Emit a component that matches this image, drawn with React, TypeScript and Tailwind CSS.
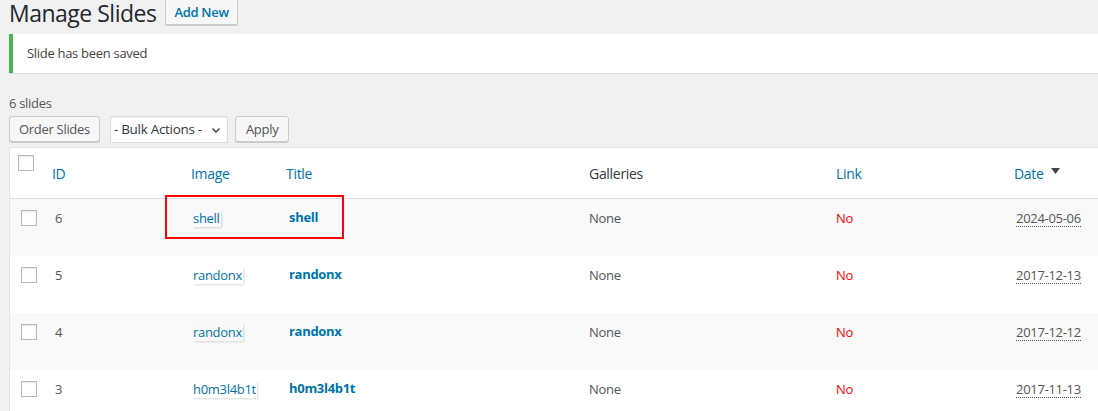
import React from "react";

const rows = [
  { id: "6", img: "shell", title: "shell", date: "2024-05-06", bg: "bg-[#f9f9f9]" },
  { id: "5", img: "randonx", title: "randonx", date: "2017-12-13", bg: "bg-white" },
  { id: "4", img: "randonx", title: "randonx", date: "2017-12-12", bg: "bg-[#f9f9f9]" },
  { id: "3", img: "h0m3l4b1t", title: "h0m3l4b1t", date: "2017-11-13", bg: "bg-white" },
];

const cols = "grid grid-cols-[32px_139px_95px_303px_247px_178px_1fr]";

function Checkbox({ className = "" }: { className?: string }) {
  return <div className={`w-[16px] h-[16px] border border-[#b4b9be] bg-white shadow-[inset_0_1px_2px_rgba(0,0,0,0.1)] ${className}`} />;
}

export default function App() {
  return (
    <div className="w-[1098px] h-[411px] overflow-hidden bg-[#f1f1f1] pl-[9px] relative tracking-[-0.3px]" style={{ fontFamily: '"Open Sans", "Noto Sans", sans-serif' }}>
      <div className="flex items-start h-[34px]">
        <h1 className="text-[23px] leading-[26px] text-[#23282d] tracking-[-0.5px]">Manage Slides</h1>
        <button className="ml-[9px] h-[26px] px-[8px] border border-[#ccc] bg-[#f7f7f7] rounded-[2px] text-[13px] font-semibold text-[#0073aa] leading-[24px] mt-[-1px] shadow-[0_1px_0_#ccc]">Add New</button>
      </div>
      <div className="h-[39px] bg-white border-l-4 border-[#46b450] shadow-[0_1px_1px_rgba(0,0,0,0.08)] flex items-center pl-[14px] text-[13px] text-[#444]">
        Slide has been saved
      </div>
      <div className="mt-[22px] text-[13px] text-[#555] leading-[16px]">6 slides</div>
      <div className="mt-[5px] flex items-start gap-[10px] h-[31px]">
        <button className="h-[26px] px-[9px] border border-[#ccc] bg-[#f7f7f7] rounded-[3px] text-[13px] text-[#555] shadow-[0_1px_0_#ccc] leading-[24px]">Order Slides</button>
        <div className="w-[118px] h-[27px] border border-[#ddd] bg-white flex items-center pl-[3px] pr-[6px] text-[13.5px] text-[#32373c] shadow-[inset_0_1px_2px_rgba(0,0,0,0.07)] whitespace-nowrap">
          <span className="flex-1">- Bulk Actions -</span>
          <svg width="10" height="10" viewBox="0 0 10 10"><path d="M1.5 3.5 L5 7 L8.5 3.5" fill="none" stroke="#32373c" strokeWidth="1.4" /></svg>
        </div>
        <button className="ml-[-3px] h-[26px] px-[10px] border border-[#ccc] bg-[#f7f7f7] rounded-[3px] text-[13px] text-[#555] shadow-[0_1px_0_#ccc] leading-[24px]">Apply</button>
      </div>
      <div className="border border-[#e5e5e5] border-r-0 bg-white">
        <div className={`${cols} h-[51px] border-b border-[#e1e1e1] text-[14px] text-[#0073aa]`}>
          <div className="pt-[7px] pl-[8px]"><Checkbox /></div>
          <div className="pl-[10px] pt-[15px]">ID</div>
          <div className="pl-[10px] pt-[15px]">Image</div>
          <div className="pl-[10px] pt-[15px]">Title</div>
          <div className="pl-[10px] pt-[15px] text-[#32373c]">Galleries</div>
          <div className="pl-[10px] pt-[15px]">Link</div>
          <div className="pl-[10px] pt-[15px] flex items-start gap-[7px]">
            <span>Date</span>
            <svg className="mt-[5px]" width="9" height="7" viewBox="0 0 9 7"><path d="M0 0 H9 L4.5 6 Z" fill="#444" /></svg>
          </div>
        </div>
        {rows.map((r) => (
          <div key={r.id} className={`${cols} h-[57px] ${r.bg} text-[13px] text-[#555]`}>
            <div className="pt-[11px] pl-[11px]"><Checkbox /></div>
            <div className="pl-[13px] pt-[10px]">{r.id}</div>
            <div className="pl-[12px] pt-[10px]">
              <span className="inline-block text-[#0073aa] leading-[17px] pr-[1px] shadow-[1px_1px_2px_rgba(0,0,0,0.15)]">{r.img}</span>
            </div>
            <div className="pl-[13px] pt-[10px] font-bold text-[#0073aa] text-[13px] leading-[17px]">{r.title}</div>
            <div className="pl-[10px] pt-[10px]">None</div>
            <div className="pl-[10px] pt-[10px] text-[#f00]">No</div>
            <div className="pl-[12px] pt-[10px]">
              <span className="border-b border-dotted border-[#555] leading-[15px] inline-block">{r.date}</span>
            </div>
          </div>
        ))}
      </div>
      <div className="absolute left-[165px] top-[195px] w-[179px] h-[44px] border-2 border-[#f00]" />
    </div>
  );
}
